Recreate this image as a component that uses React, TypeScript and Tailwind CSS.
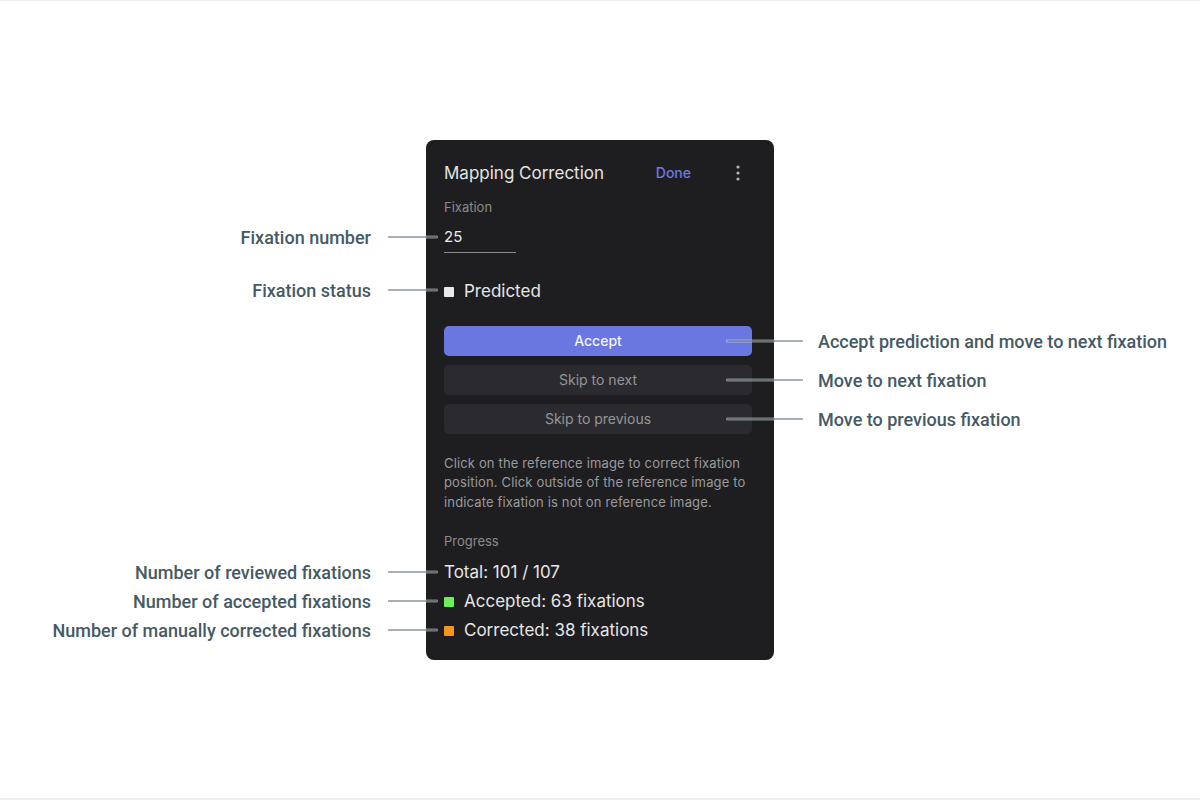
const Callout = ({ side, top, children }: { side: 'left' | 'right'; top: number; children: React.ReactNode }) => {
    const line = <div className="h-px w-full rounded-full bg-[#52636d] shadow-[0_0_0_1px_rgba(255,255,255,0.45)]" />
    if (side === 'left') {
        return (
            <div
                className="absolute right-[calc(100%-11px)] flex -translate-y-1/2 items-center gap-[17px]"
                style={{ top }}
            >
                <span className="whitespace-nowrap text-[18px] font-medium text-[#455a64]">{children}</span>
                <div className="w-[49px]">{line}</div>
            </div>
        )
    }
    return (
        <div className="absolute left-[301px] flex -translate-y-1/2 items-center gap-[15px]" style={{ top }}>
            <div className="w-[76px]">{line}</div>
            <span className="whitespace-nowrap text-[18px] font-medium text-[#455a64]">{children}</span>
        </div>
    )
}

const Kebab = () => (
    <svg width="20" height="20" viewBox="0 0 20 20" fill="#b3b3b3">
        <circle cx="10" cy="4" r="1.6" />
        <circle cx="10" cy="10" r="1.6" />
        <circle cx="10" cy="16" r="1.6" />
    </svg>
)

const StatusRow = ({ color, label }: { color?: string; label: string }) => (
    <div className="flex h-[29px] items-center text-[17px] text-[#e6e6e6]">
        {color && <span className={`mr-[10px] h-[10px] w-[10px] rounded-[1px] ${color}`} />}
        {label}
    </div>
)

export default function App() {
    return (
        <div
            className="flex h-[800px] w-[1200px] items-center justify-center border-t border-b-2 border-t-[#ececf2] border-b-[#eceff3] bg-white"
            style={{ fontFamily: 'Roboto, "Liberation Sans", sans-serif' }}
        >
            <div className="relative">
                <div
                    className="flex h-[520px] w-[348px] flex-col rounded-[8px] bg-[#1e1e21] px-[18px] pt-[22px]"
                    style={{ fontFamily: 'Inter, "Liberation Sans", sans-serif' }}
                >
                    <div className="flex h-[24px] items-center">
                        <span className="text-[17px] text-[#e4e4e4]">Mapping Correction</span>
                        <span className="ml-auto -translate-y-px text-[14px] font-medium text-[#6e7ae0]">Done</span>
                        <span className="ml-[37px] mr-[8px] flex -translate-y-px">
                            <Kebab />
                        </span>
                    </div>

                    <div className="mt-[13px] h-[16px] text-[13px] leading-[16px] text-[#8b8b8b]">Fixation</div>
                    <div className="mt-[9px] flex h-[29px] w-[72px] items-center border-b border-[#8d8d8d] text-[15px] text-[#ececec]">
                        25
                    </div>

                    <div className="mt-[27px] flex h-[24px] items-center text-[17px] text-[#e6e6e6]">
                        <span className="mr-[10px] h-[10px] w-[10px] rounded-[1px] bg-[#e8e8e8]" />
                        Predicted
                    </div>

                    <div className="mt-[22px] flex flex-col gap-[9px]">
                        <button className="h-[30px] w-[308px] rounded-[5px] bg-[#6b77e0] text-[14px] font-medium text-[#f2f2f8]">
                            Accept
                        </button>
                        <button className="h-[30px] w-[308px] rounded-[5px] bg-[#2b2b2f] text-[14px] text-[#959597]">
                            Skip to next
                        </button>
                        <button className="h-[30px] w-[308px] rounded-[5px] bg-[#2b2b2f] text-[14px] text-[#959597]">
                            Skip to previous
                        </button>
                    </div>

                    <p className="mt-[20px] text-[13px] leading-[19.5px] tracking-[0.15px] text-[#9a9a9c]">
                        Click on the reference image to correct fixation position. Click outside of the reference
                        image to indicate fixation is not on reference image.
                    </p>

                    <div className="mt-[21px] h-[16px] text-[13px] leading-[16px] text-[#8b8b8b]">Progress</div>
                    <div className="mt-[9px] flex flex-col">
                        <StatusRow label="Total: 101 / 107" />
                        <StatusRow color="bg-[#6cf05a]" label="Accepted: 63 fixations" />
                        <StatusRow color="bg-[#f6951d]" label="Corrected: 38 fixations" />
                    </div>
                </div>

                <Callout side="left" top={97.5}>Fixation number</Callout>
                <Callout side="left" top={150.5}>Fixation status</Callout>
                <Callout side="left" top={432.5}>Number of reviewed fixations</Callout>
                <Callout side="left" top={461.5}>Number of accepted fixations</Callout>
                <Callout side="left" top={490.5}>Number of manually corrected fixations</Callout>

                <Callout side="right" top={201}>Accept prediction and move to next fixation</Callout>
                <Callout side="right" top={240}>Move to next fixation</Callout>
                <Callout side="right" top={279}>Move to previous fixation</Callout>
            </div>
        </div>
    )
}
